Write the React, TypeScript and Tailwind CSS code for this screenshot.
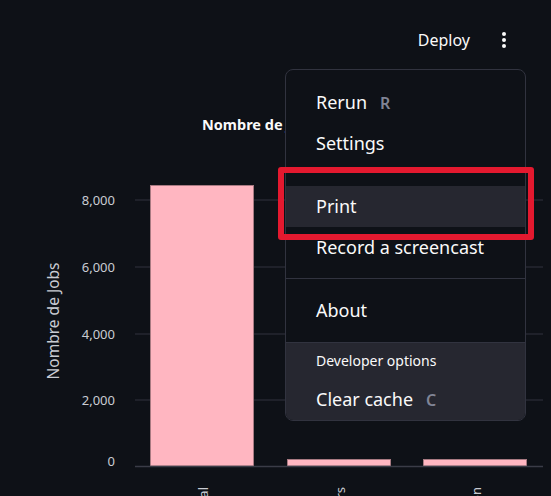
import { ReactNode } from 'react';

const font = { fontFamily: '"Noto Sans", "Open Sans", sans-serif' };

const ticks = [
  { label: '8,000', y: 200 },
  { label: '6,000', y: 267 },
  { label: '4,000', y: 334 },
  { label: '2,000', y: 400 },
];

const bars = [
  { x: 150, top: 185, label: 'Commercial', lx: 208 },
  { x: 287, top: 459, label: 'Développeurs', lx: 345 },
  { x: 423, top: 459, label: 'Administration', lx: 481 },
];

const Chart = () => {
  return (
    <svg width={551} height={496} className="absolute left-0 top-0">
      <text x={202} y={130} fill="#fafafa" fontSize={14.5} fontWeight={700} style={font}>
        Nombre de Jobs par Catégorie
      </text>
      {ticks.map((t, i) => (
        <g key={i}>
          <line x1={135} x2={543} y1={t.y} y2={t.y} stroke="#31333f" strokeWidth={1} />
          <text x={115} y={t.y + 5} textAnchor="end" fill="#c9ccd3" fontSize={13} style={font}>
            {t.label}
          </text>
        </g>
      ))}
      <text x={115} y={466} textAnchor="end" fill="#c9ccd3" fontSize={13} style={font}>
        0
      </text>
      <text
        x={0}
        y={0}
        transform="translate(59 321) rotate(-90)"
        textAnchor="middle"
        fill="#c9ccd3"
        fontSize={15.5}
        style={font}
      >
        Nombre de Jobs
      </text>
      {bars.map((b, i) => (
        <g key={i}>
          <rect
            x={b.x + 0.5}
            y={b.top + 0.5}
            width={103}
            height={466 - b.top - 0.5}
            fill="#ffb6c1"
            stroke="#a87a82"
            strokeWidth={1}
          />
          <text
            x={0}
            y={0}
            transform={`translate(${b.lx} 487) rotate(-90)`}
            textAnchor="end"
            fill="#c9ccd3"
            fontSize={13}
            style={font}
          >
            {b.label}
          </text>
        </g>
      ))}
      <line x1={135} x2={543} y1={466.5} y2={466.5} stroke="#3a3c47" strokeWidth={1.5} />
    </svg>
  );
};

const Item = ({ children, shortcut, active }: { children: ReactNode; shortcut?: string; active?: boolean }) => {
  return (
    <div className={`flex h-[41px] items-center pl-[30px] text-[18px] text-[#fafafa] ${active ? 'bg-[#262730]' : ''}`}>
      <span>{children}</span>
      {shortcut && <span className="ml-[13px] text-[16px] font-semibold text-[#808495]">{shortcut}</span>}
    </div>
  );
};

export default function App() {
  return (
    <div className="relative h-[496px] w-[551px] overflow-hidden bg-[#0e1117]" style={font}>
      <Chart />
      <div className="absolute right-0 top-0 flex h-[80px] items-start pt-[27px]">
        <span className="text-[16px] leading-[26px] text-[#fafafa]">Deploy</span>
        <div className="ml-[32px] mr-[45px] flex h-[26px] flex-col items-center justify-center gap-[2px]">
          <span className="h-[4px] w-[4px] rounded-full bg-[#fafafa]" />
          <span className="h-[4px] w-[4px] rounded-full bg-[#fafafa]" />
          <span className="h-[4px] w-[4px] rounded-full bg-[#fafafa]" />
        </div>
      </div>
      <div className="absolute left-[285px] top-[69px] w-[241px] overflow-hidden rounded-lg border border-[#31333f] bg-[#0e1117]">
        <div className="pb-[8px] pt-[12px]">
          <Item shortcut="R">Rerun</Item>
          <Item>Settings</Item>
        </div>
        <div className="border-t border-[#31333f] pb-[10px] pt-[13px]">
          <Item active>Print</Item>
          <Item>Record a screencast</Item>
        </div>
        <div className="border-t border-[#31333f] py-[11px]">
          <Item>About</Item>
        </div>
        <div className="border-t border-[#31333f] bg-[#262730] pt-[4px]">
          <div className="mb-[6px] flex h-[26px] items-center pl-[30px] text-[14px] text-[#fafafa]">Developer options</div>
          <Item shortcut="C">Clear cache</Item>
        </div>
      </div>
      <div className="absolute left-[278px] top-[167px] h-[73px] w-[256px] rounded-[3px] border-[6px] border-[#e4192f]" />
    </div>
  );
}
